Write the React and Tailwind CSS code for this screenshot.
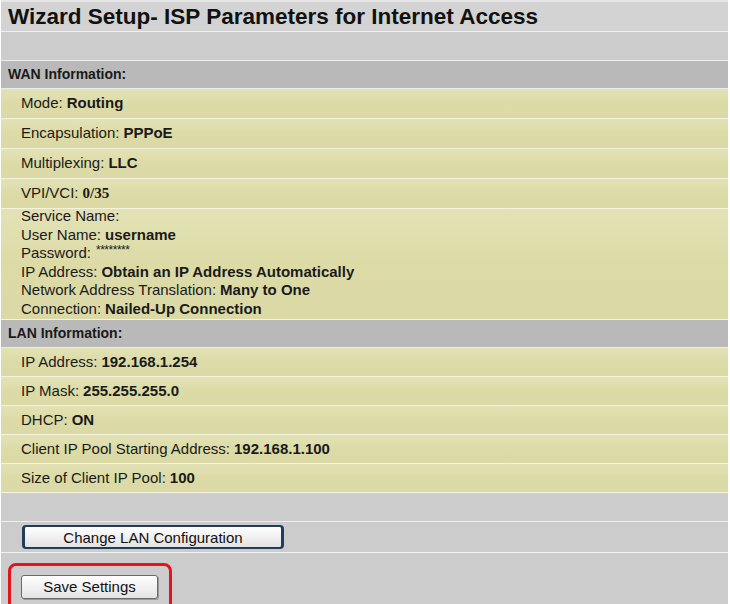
import React from 'react';

const wan = [
  ['Mode:', 'Routing'],
  ['Encapsulation:', 'PPPoE'],
  ['Multiplexing:', 'LLC'],
];

const account = [
  ['Service Name:', ''],
  ['User Name:', 'username'],
  ['Password:', null],
  ['IP Address:', 'Obtain an IP Address Automatically'],
  ['Network Address Translation:', 'Many to One'],
  ['Connection:', 'Nailed-Up Connection'],
];

const lan = [
  ['IP Address:', '192.168.1.254'],
  ['IP Mask:', '255.255.255.0'],
  ['DHCP:', 'ON'],
  ['Client IP Pool Starting Address:', '192.168.1.100'],
  ['Size of Client IP Pool:', '100'],
];

const yellow = 'bg-gradient-to-b from-[#e3e2b6] via-[#dcdba6] to-[#dbdaa6] border-b border-[#f4f3de]';

const Row = ({ label, value, h = 'h-[29px]' }) => (
  <div className={`${h} flex items-center pl-[20px] ${yellow}`}>
    <span>{label}</span>
    <span className="ml-[4px] font-bold">{value}</span>
  </div>
);

const Header = ({ children }) => (
  <div className="h-[28px] flex items-center pl-[7px] bg-[#b9b9b9] text-[14px] font-bold border-b border-[#ececec]">
    {children}
  </div>
);

export default function App() {
  return (
    <div className="min-h-screen bg-white text-[15px] text-[#1a1a1a]" style={{ fontFamily: '"Liberation Sans", Arial, sans-serif' }}>
      <div className="w-[728px] pl-px">
        {/* title */}
        <div className="h-[32px] flex items-center pl-[7px] bg-[#d3d3d3] border-t-2 border-[#e6e6e6] border-b border-b-[#f0f0f0] text-[22.5px] font-bold text-[#111]">
          Wizard Setup- ISP Parameters for Internet Access
        </div>
        <div className="h-[29px] bg-[#cccccc] border-b border-[#eeeeee]" />

        <Header>WAN Information:</Header>
        {wan.map(([l, v]) => <Row key={l} label={l} value={v} h="h-[30px]" />)}
        <div className={`h-[30px] flex items-center pl-[20px] ${yellow}`}>
          <span>VPI/VCI:</span>
          <span className="ml-[4px] font-bold text-[15px]" style={{ fontFamily: '"Liberation Serif", "Times New Roman", serif' }}>0/35</span>
        </div>
        <div className={`h-[111px] pl-[20px] leading-[18.5px] ${yellow}`}>
          <div className="-translate-y-[2px]">
            {account.map(([l, v]) => (
              <div key={l} className="flex">
                <span>{l}</span>
                {v === null ? (
                  <span className="ml-[5px] text-[12px] leading-[13px] tracking-[-0.5px]">********</span>
                ) : (
                  <span className="ml-[4px] font-bold">{v}</span>
                )}
              </div>
            ))}
          </div>
        </div>

        <Header>LAN Information:</Header>
        {lan.map(([l, v]) => <Row key={l} label={l} value={v} />)}

        <div className="h-[29px] bg-[#cccccc] border-b border-[#eeeeee]" />
        <div className="h-[31px] flex items-center pl-[21px] bg-[#cccccc] border-b border-[#f2f2f2]">
          <button className="w-[262px] h-[24px] rounded-[4px] border-2 border-x-[3px] border-[#213d5b] bg-gradient-to-b from-[#ffffff] to-[#e2e2e2] text-[15px] text-[#111]">
            Change LAN Configuration
          </button>
        </div>
        <div className="h-[60px] bg-[#cccccc] pl-[7px] pt-[10px]">
          <div className="w-[164px] h-[50px] rounded-[8px] border-[3px] border-[#e3141c] pl-[10px] pt-[9px]">
            <button className="w-[137px] h-[24px] rounded-[3px] border border-[#6a6a6a] bg-gradient-to-b from-[#ffffff] to-[#e4e4e4] text-[15px] text-[#111] shadow-[1px_1px_0_#9a9a9a]">
              Save Settings
            </button>
          </div>
        </div>
      </div>
    </div>
  );
}
